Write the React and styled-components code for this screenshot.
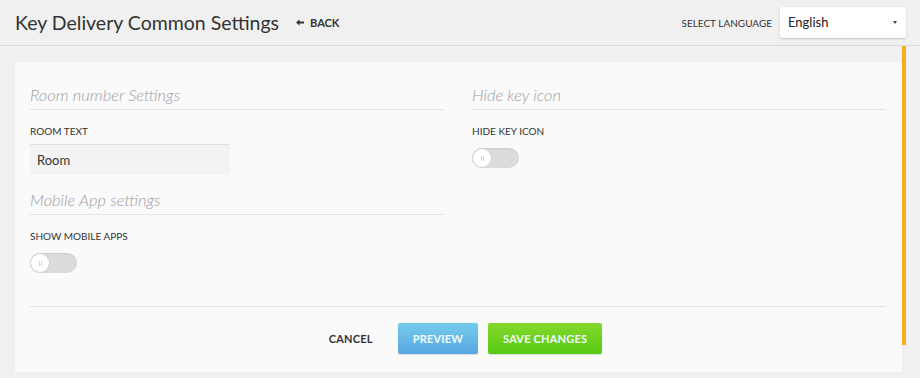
import React, { useState } from "react";
import styled, { createGlobalStyle } from "styled-components";

const GlobalStyle = createGlobalStyle`
  html, body {
    margin: 0;
    padding: 0;
    background: #efefef;
    font-family: Lato, "Open Sans", sans-serif;
    color: #333;
  }
  * { box-sizing: border-box; }
`;

const Page = styled.div`
  width: 920px;
  height: 378px;
  overflow: hidden;
  background: #f0f0f0;
`;

const Header = styled.header`
  height: 46px;
  display: flex;
  align-items: center;
  padding: 0 14px 0 15px;
  border-bottom: 1px solid #dcdcdc;
`;

const Title = styled.h1`
  margin: 0;
  font-size: 19.5px;
  font-weight: 400;
  color: #333;
`;

const BackLink = styled.a`
  margin-left: 17px;
  display: flex;
  align-items: center;
  gap: 6px;
  font-size: 11px;
  font-weight: 700;
  color: #333;
  text-decoration: none;
  cursor: pointer;
`;

const LangBox = styled.div`
  margin-left: auto;
  display: flex;
  align-items: center;
  gap: 8px;
`;

const LangLabel = styled.span`
  font-size: 10px;
  color: #333;
`;

const Select = styled.div`
  width: 126px;
  height: 31px;
  margin-top: -1px;
  background: #fff;
  box-shadow: 0 1px 2px rgba(0, 0, 0, 0.18);
  border-radius: 2px;
  display: flex;
  align-items: center;
  justify-content: space-between;
  padding: 0 9px 0 8px;
  font-size: 13px;
  color: #222;
`;

const Caret = styled.span`
  width: 0;
  height: 0;
  border-left: 2.5px solid transparent;
  border-right: 2.5px solid transparent;
  border-top: 3px solid #444;
`;

const Body = styled.div`
  display: flex;
  height: 332px;
  padding-right: 14px;
`;

const Scroller = styled.div`
  flex: 1;
  padding: 16px 0 0 15px;
  overflow: hidden;
`;

const Track = styled.div`
  width: 4px;
`;

const Thumb = styled.div`
  width: 4px;
  height: 299px;
  background: #f6ae1d;
`;

const Card = styled.section`
  background: #fafafa;
  padding: 23px 16px 18px 15px;
`;

const Columns = styled.div`
  display: grid;
  grid-template-columns: 1fr 1fr;
  column-gap: 28px;
  align-items: start;
`;

const Column = styled.div`
  display: flex;
  flex-direction: column;
`;

const SectionTitle = styled.h2`
  margin: ${(p) => (p.$first ? "0" : "15px")} 0 0;
  font-size: 16.5px;
  line-height: 20px;
  font-weight: 300;
  font-style: italic;
  color: #9e9e9e;
  padding-bottom: 4px;
  border-bottom: 1px solid #e4e4e4;
`;

const FieldLabel = styled.label`
  margin-top: 14px;
  font-size: 10px;
  line-height: 14px;
  text-transform: uppercase;
  color: #333;
`;

const TextInput = styled.input`
  margin-top: 6px;
  width: 200px;
  height: 31px;
  border: none;
  border-top: 1px solid #e0e0e0;
  background: #f3f3f3;
  padding: 0 7px;
  font-family: inherit;
  font-size: 13px;
  color: #333;
  outline: none;
`;

const ToggleTrack = styled.button`
  margin-top: 10px;
  width: 47px;
  height: 20px;
  border: none;
  border-radius: 10px;
  background: #dcdcdc;
  box-shadow: inset 0 1px 2px rgba(0, 0, 0, 0.08);
  padding: 0;
  position: relative;
  cursor: pointer;
`;

const Knob = styled.span`
  position: absolute;
  top: 1px;
  left: ${(p) => (p.$on ? "28px" : "1px")};
  width: 18px;
  height: 18px;
  border-radius: 50%;
  background: #fff;
  box-shadow: 0 0 0 1px #d2d2d2;
  display: flex;
  align-items: center;
  justify-content: center;
  gap: 1px;

  &::before,
  &::after {
    content: "";
    width: 1px;
    height: 5px;
    background: #d6d6d6;
  }
`;

const Footer = styled.div`
  margin-top: 33px;
  border-top: 1px solid #e4e4e4;
  padding-top: 16px;
  display: flex;
  justify-content: center;
  gap: 10px;
`;

const Button = styled.button`
  height: 31px;
  padding: 0 ${(p) => p.$pad || 15}px;
  border: none;
  border-radius: 2px;
  font-family: inherit;
  font-size: 11px;
  font-weight: 700;
  letter-spacing: 0.2px;
  text-transform: uppercase;
  cursor: pointer;
  color: ${(p) => (p.$variant === "plain" ? "#333" : "#f2fbff")};
  background: ${(p) =>
    p.$variant === "blue"
      ? "linear-gradient(#72cdea, #5aa6e2)"
      : p.$variant === "green"
      ? "linear-gradient(#84d82c, #57cb14)"
      : "transparent"};
  box-shadow: ${(p) =>
    p.$variant === "plain" ? "none" : "0 1px 1px rgba(0,0,0,0.12)"};
`;

const Toggle = ({ on, onClick }) => (
  <ToggleTrack type="button" onClick={onClick}>
    <Knob $on={on} />
  </ToggleTrack>
);

const App = () => {
  const [room, setRoom] = useState("Room");
  const [showApps, setShowApps] = useState(false);
  const [hideKey, setHideKey] = useState(false);

  return (
    <>
      <GlobalStyle />
      <Page>
        <Header>
          <Title>Key Delivery Common Settings</Title>
          <BackLink>
            <svg width="8" height="7" viewBox="0 0 8 7">
              <path d="M0 3.5 L3.5 0.5 L3.5 2.6 L8 2.6 L8 4.4 L3.5 4.4 L3.5 6.5 Z" fill="#333" />
            </svg>
            BACK
          </BackLink>
          <LangBox>
            <LangLabel>SELECT LANGUAGE</LangLabel>
            <Select>
              English
              <Caret />
            </Select>
          </LangBox>
        </Header>
        <Body>
          <Scroller>
            <Card>
              <Columns>
                <Column>
                  <SectionTitle $first>Room number Settings</SectionTitle>
                  <FieldLabel>Room text</FieldLabel>
                  <TextInput value={room} onChange={(e) => setRoom(e.target.value)} />
                  <SectionTitle>Mobile App settings</SectionTitle>
                  <FieldLabel>Show mobile apps</FieldLabel>
                  <Toggle on={showApps} onClick={() => setShowApps(!showApps)} />
                </Column>
                <Column>
                  <SectionTitle $first>Hide key icon</SectionTitle>
                  <FieldLabel>Hide key icon</FieldLabel>
                  <Toggle on={hideKey} onClick={() => setHideKey(!hideKey)} />
                </Column>
              </Columns>
              <Footer>
                <Button $variant="plain">Cancel</Button>
                <Button $variant="blue">Preview</Button>
                <Button $variant="green">Save changes</Button>
              </Footer>
            </Card>
          </Scroller>
          <Track>
            <Thumb />
          </Track>
        </Body>
      </Page>
    </>
  );
};

export default App;
